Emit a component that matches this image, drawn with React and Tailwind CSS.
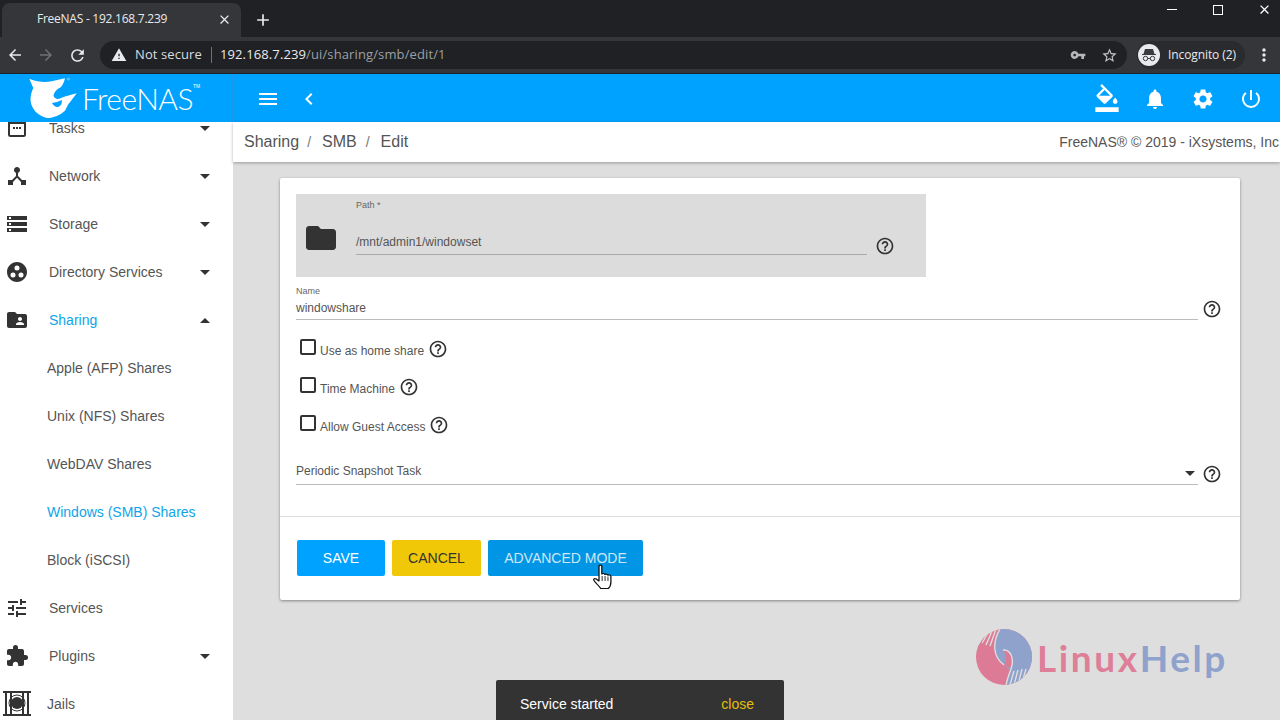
import React from "react";
import {
  MdAdd, MdArrowBack, MdArrowForward, MdClose, MdDeviceHub, MdStorage, MdExtension, MdFolder, MdFolderShared,
  MdFormatColorFill, MdGroupWork, MdHelpOutline, MdMenu, MdMoreVert, MdNotifications, MdPowerSettingsNew,
  MdRefresh, MdSettings, MdStarBorder, MdTune, MdVpnKey, MdWarning, MdChevronLeft,
} from "react-icons/md";

function TasksIcon() {
  return (
    <svg width="20" height="20" viewBox="0 0 20 20" fill="none">
      <rect x="2" y="2" width="16" height="16" rx="1.5" stroke="#333" strokeWidth="2" />
      <rect x="2" y="2" width="16" height="4" fill="#333" />
      <rect x="6" y="9" width="2" height="2" fill="#333" />
      <rect x="9" y="9" width="2" height="2" fill="#333" />
      <rect x="12" y="9" width="2" height="2" fill="#333" />
    </svg>
  );
}

function JailIcon() {
  return (
    <svg width="28" height="28" viewBox="0 0 28 28" fill="none">
      <rect x="0" y="1" width="28" height="2" fill="#333" />
      <rect x="0" y="24" width="28" height="2" fill="#333" />
      <rect x="2" y="3" width="2" height="21" fill="#333" />
      <rect x="7" y="3" width="2" height="21" fill="#333" />
      <rect x="19" y="3" width="2" height="21" fill="#333" />
      <rect x="24" y="3" width="2" height="21" fill="#333" />
      <circle cx="14" cy="13" r="6" fill="#333" />
      <circle cx="14" cy="13" r="8" stroke="#333" strokeWidth="1" />
    </svg>
  );
}

function Caret({ up }) {
  return (
    <span
      className={
        up
          ? "w-0 h-0 border-x-[5px] border-x-transparent border-b-[5px] border-b-[#333]"
          : "w-0 h-0 border-x-[5px] border-x-transparent border-t-[5px] border-t-[#333]"
      }
    />
  );
}

function NavRow({ icon, label, caret, up, active, tight }) {
  const color = active ? "text-[#0ea5e9]" : "text-[#555]";
  return (
    <div className="h-12 shrink-0 flex items-center text-sm">
      <span className="w-[34px] flex justify-center shrink-0">{icon}</span>
      <span className={tight ? `ml-[13px] flex-1 ${color}` : `ml-[15px] flex-1 ${color}`}>{label}</span>
      {caret && (
        <span className="mr-[23px] flex">
          <Caret up={up} />
        </span>
      )}
    </div>
  );
}

function SubRow({ label, active }) {
  return (
    <div className={active ? "h-12 shrink-0 flex items-center pl-[47px] text-sm text-[#0ea5e9]" : "h-12 shrink-0 flex items-center pl-[47px] text-sm text-[#555]"}>
      {label}
    </div>
  );
}

function Help() {
  return <MdHelpOutline className="text-[#333] shrink-0" size={20} />;
}

function CheckRow({ label }) {
  return (
    <div className="h-[38px] flex items-center pl-1">
      <span className="w-4 h-4 border-2 border-[#333] rounded-[2px] shrink-0 -mt-[6px]" />
      <span className="ml-1 text-xs text-[#555] mt-[1px]">{label}</span>
      <span className="ml-1 -mt-[2px] flex"><Help /></span>
    </div>
  );
}

function Shark() {
  return (
    <svg width="50" height="42" viewBox="28 77 50 42">
      <path
        fill="#fff"
        d="M29.3 78.7 C37 82 45 82.5 51.7 81.3 L65 78.3 C64 83 62 86 60.7 87.3 C57 89 54 92 53.5 96 C55 99 58 100 61 98 C65 96.5 70 95 76.7 93.3 C74 97 71.5 100 70 102.3 C68 104 67 107 65 110.7 C60 115 54 118 47 118 C38 116 31 109 30.5 100 C30.5 95 31.5 92 33.3 88 Z"
      />
      <path fill="#00a2ff" d="M52 103 L57 102 L62 100 L61.5 104 C59 108 55 108 52 103 Z" />
      <circle cx="68.5" cy="79" r="1" fill="none" stroke="#fff" strokeWidth="0.4" />
    </svg>
  );
}

function IncognitoIcon() {
  return (
    <svg width="22" height="22" viewBox="0 0 22 22">
      <circle cx="11" cy="11" r="11" fill="#e8eaed" />
      <path fill="#3a3b3f" d="M7 5 H15 L16.5 10 H18 V11 H4 V10 H5.5 Z" />
      <circle cx="7.5" cy="14.5" r="2.2" fill="none" stroke="#3a3b3f" strokeWidth="1" />
      <circle cx="14.5" cy="14.5" r="2.2" fill="none" stroke="#3a3b3f" strokeWidth="1" />
      <rect x="9.5" y="14" width="3" height="1" fill="#3a3b3f" />
    </svg>
  );
}

function HandCursor() {
  return (
    <svg width="21" height="26" viewBox="0 0 18 26" preserveAspectRatio="none">
      <path
        fill="#fff"
        stroke="#111"
        strokeWidth="1.1"
        strokeLinejoin="round"
        d="M6 2 C6 0.8 8.4 0.8 8.4 2 V10 C9.5 9 11 9.5 11 10.5 C12 9.8 13.4 10.2 13.6 11.2 C14.6 10.6 16.2 11 16.2 12.4 V18 C16.2 21 15 23.5 14 24.5 H7.5 C6.5 22.5 3 19 1.6 16.2 C1 15 2.4 14 3.6 15 L6 17 Z"
      />
      <path stroke="#111" strokeWidth="0.8" d="M8.7 12 V17 M11.2 12 V17 M13.7 12.5 V17" />
    </svg>
  );
}

function HandsLogo() {
  const bg = "#dedede";
  return (
    <svg width="56" height="56" viewBox="0 0 56 56">
      <defs>
        <clipPath id="logo-disc">
          <circle cx="28" cy="28" r="28" />
        </clipPath>
      </defs>
      <g clipPath="url(#logo-disc)">
        <rect width="56" height="56" fill="#dd7a96" />
        <path fill="#8ea2cc" d="M24 0 C16 14 17 28 28 36 L34 41 C33 46 31 50 30 56 L56 56 L56 0 Z" />
        <path fill="#dd7a96" d="M27 21 C35 20 38 30 35 39 L28 36 C31 31 31 26 27 21 Z" />
        <g fill="none" stroke={bg} strokeWidth="1.4">
          <path d="M24 0 C16 14 17 28 28 36" />
          <path d="M27 21 C36 20 38 32 35 40 C33 46 31 50 30 56" />
          <path d="M6 14 L12 4 M10 16 L16 2 M14 17 L20 0" />
          <path d="M34 56 L38 42 M38 56 L42 41 M42 56 L46 40 M46 54 L50 40" />
        </g>
      </g>
    </svg>
  );
}

export default function App() {
  return (
    <div className="w-[1280px] h-[720px] overflow-hidden flex flex-col relative font-['Liberation_Sans',Arial,sans-serif] bg-[#dedede]">
      {/* browser tabs */}
      <div className="h-[37px] shrink-0 bg-[#202124] flex items-end relative">
        <div className="ml-[2px] w-[239px] h-[34px] bg-[#35363a] rounded-t-lg flex items-center pl-[35px] pr-[9px] font-['Open_Sans',sans-serif] text-xs tracking-[-0.25px] text-[#e8eaed]">
          <span className="flex-1 -mt-[2px]">FreeNAS - 192.168.7.239</span>
          <MdClose size={15} className="text-[#e8eaed] -mt-[2px]" />
        </div>
        <MdAdd size={20} className="ml-[12px] mb-[7px] text-[#e8eaed]" />
        <div className="ml-auto flex items-center h-full self-start -mr-[7px]">
          <span className="w-[46px] flex justify-center -mt-[18px]"><span className="w-[10px] h-px bg-white" /></span>
          <span className="w-[46px] flex justify-center -mt-[18px]"><span className="w-[10px] h-[10px] border border-white" /></span>
          <span className="w-[46px] flex justify-center -mt-[18px]"><MdClose size={15} className="text-white" /></span>
        </div>
      </div>
      {/* browser toolbar */}
      <div className="h-[37px] shrink-0 bg-[#35363a] flex items-center font-['Open_Sans',sans-serif] text-[#e8eaed] border-b border-[#202124]">
        <MdArrowBack size={18} className="ml-[6px]" />
        <MdArrowForward size={18} className="ml-[13px] text-[#6f7073]" />
        <MdRefresh size={19} className="ml-[13px]" />
        <div className="ml-[13px] w-[1027px] h-[28px] rounded-full bg-[#202124] flex items-center pl-[11px] pr-[12px]">
          <MdWarning size={16} className="text-[#e8eaed]" />
          <span className="ml-[8px] text-[13px] tracking-[0.1px] text-[#dadce0]">Not secure</span>
          <span className="ml-[9px] w-px h-4 bg-[#6f7073]" />
          <span className="ml-[8px] text-[13px] tracking-[0.12px] text-[#e8eaed]">192.168.7.239<span className="text-[#9aa0a6]">/ui/sharing/smb/edit/1</span></span>
          <MdVpnKey size={16} className="ml-auto text-[#b5b7ba]" />
          <MdStarBorder size={17} className="ml-[15px] mr-[-3px] text-[#c4c6c9]" />
        </div>
        <div className="ml-[10px] w-[108px] h-[28px] rounded-full bg-[#2a2b2e] flex items-center pl-[1px]">
          <IncognitoIcon />
          <span className="ml-[8px] text-xs tracking-[-0.1px] text-[#e8eaed]">Incognito (2)</span>
        </div>
        <MdMoreVert size={20} className="ml-[9px] text-[#e8eaed]" />
      </div>
      {/* app header */}
      <div className="h-12 shrink-0 bg-[#00a2ff] flex items-center text-white">
        <div className="w-[233px] h-full shrink-0 flex items-center pl-[28px] border-r border-[#1b98e6]">
          <Shark />
          <span className="ml-[4px] font-['Lato',sans-serif] font-light text-[30px] tracking-[-0.5px] leading-none">FreeNAS</span>
          <span className="text-[5px] -mt-[22px]">TM</span>
        </div>
        <MdMenu size={24} className="ml-[23px] mt-[2px]" />
        <MdChevronLeft size={24} className="ml-[17px] mt-[2px]" />
        <div className="ml-auto flex items-center gap-[24px] pr-[17px] mt-[2px]">
          <MdFormatColorFill size={28} className="-mr-[2px] -mt-[2px]" />
          <MdNotifications size={24} />
          <MdSettings size={24} />
          <MdPowerSettingsNew size={24} />
        </div>
      </div>
      {/* body */}
      <div className="flex-1 min-h-0 flex">
        <aside className="w-[233px] shrink-0 bg-white overflow-hidden flex flex-col">
          <div className="-mt-[18px] flex flex-col">
            <NavRow icon={<TasksIcon />} label="Tasks" caret />
            <NavRow icon={<MdDeviceHub size={24} className="text-[#333]" />} label="Network" caret />
            <NavRow icon={<MdStorage size={24} className="text-[#333]" />} label="Storage" caret />
            <NavRow icon={<MdGroupWork size={24} className="text-[#333]" />} label="Directory Services" caret />
            <NavRow icon={<MdFolderShared size={24} className="text-[#333]" />} label="Sharing" caret up active />
            <SubRow label="Apple (AFP) Shares" />
            <SubRow label="Unix (NFS) Shares" />
            <SubRow label="WebDAV Shares" />
            <SubRow label="Windows (SMB) Shares" active />
            <SubRow label="Block (iSCSI)" />
            <NavRow icon={<MdTune size={24} className="text-[#333]" />} label="Services" />
            <NavRow icon={<MdExtension size={24} className="text-[#333]" />} label="Plugins" caret />
            <NavRow icon={<JailIcon />} label="Jails" tight />
          </div>
        </aside>
        <main className="flex-1 min-w-0 flex flex-col relative">
          <div className="h-10 shrink-0 bg-white flex items-center pl-[11px] shadow-[0_1px_3px_rgba(0,0,0,0.3)] text-[#555]">
            <span className="text-base">Sharing</span>
            <span className="ml-[8px] text-sm text-[#777]">/</span>
            <span className="ml-[11px] text-base">SMB</span>
            <span className="ml-[9px] text-sm text-[#777]">/</span>
            <span className="ml-[11px] text-base">Edit</span>
            <span className="ml-auto mr-[1px] text-sm whitespace-nowrap text-[#555]">FreeNAS® © 2019 - iXsystems, Inc</span>
          </div>
          <div className="mt-4 ml-[47px] w-[960px] h-[422px] bg-white rounded-[2px] shadow-[0_1px_3px_rgba(0,0,0,0.4)] flex flex-col">
            <div className="px-4 pt-4">
              <div className="w-[630px] h-[83px] bg-[#dcdcdc] flex">
                <MdFolder size={36} className="text-[#333] ml-[7px] mt-[26px] shrink-0" />
                <div className="ml-[17px] w-[511px] flex flex-col">
                  <span className="mt-[7px] text-[9px] leading-[9px] text-[#666]">Path *</span>
                  <span className="mt-[25px] text-xs leading-[14px] text-[#555]">/mnt/admin1/windowset</span>
                  <span className="mt-[5px] h-px bg-[#aaa]" />
                </div>
                <span className="ml-[8px] mt-[42px] flex"><Help /></span>
              </div>
              <div className="mt-[10px] flex items-start">
                <div className="flex-1 flex flex-col">
                  <span className="text-[9px] leading-[9px] text-[#666]">Name</span>
                  <span className="mt-[5px] text-xs leading-[14px] text-[#555]">windowshare</span>
                  <span className="mt-[4px] h-px bg-[#bbb]" />
                </div>
                <span className="ml-[2px] mt-[12px] w-[24px] flex justify-center"><Help /></span>
              </div>
              <div className="mt-[11px] flex flex-col">
                <CheckRow label="Use as home share" />
                <CheckRow label="Time Machine" />
                <CheckRow label="Allow Guest Access" />
              </div>
              <div className="mt-[19px] flex items-start">
                <div className="flex-1 flex flex-col">
                  <div className="flex items-center justify-between pr-[3px]">
                    <span className="text-xs leading-[14px] text-[#555]">Periodic Snapshot Task</span>
                    <span className="mt-[4px] flex"><Caret /></span>
                  </div>
                  <span className="mt-[6px] h-px bg-[#bbb]" />
                </div>
                <span className="ml-[2px] mt-0 w-[24px] flex justify-center"><Help /></span>
              </div>
            </div>
            <div className="mt-[31px] h-px bg-[#ddd]" />
            <div className="mt-[23px] ml-[17px] flex gap-[7px] text-sm relative">
              <div className="w-[88px] h-9 rounded-[2px] bg-[#00a2ff] text-white flex items-center justify-center">SAVE</div>
              <div className="w-[89px] h-9 rounded-[2px] bg-[#f0c808] text-[#333] flex items-center justify-center">CANCEL</div>
              <div className="w-[155px] h-9 rounded-[2px] bg-[#0095e5] text-[#cfe6f5] flex items-center justify-center">ADVANCED MODE</div>
              <span className="absolute left-[295px] top-[24px] flex"><HandCursor /></span>
            </div>
          </div>
          {/* watermark */}
          <div className="absolute left-[743px] top-[507px] flex items-center">
            <HandsLogo />
            <span className="ml-[5px] font-['Lato',sans-serif] font-bold text-[37px] tracking-[2.6px] leading-none text-[#dd7f99]">
              Linux<span className="text-[#8ea2cc]">Help</span>
            </span>
          </div>
          {/* snackbar */}
          <div className="absolute left-[263px] top-[558px] w-[288px] h-12 bg-[#333] rounded-t-[2px] flex items-center pl-6 pr-[30px] text-sm">
            <span className="text-white">Service started</span>
            <span className="ml-auto text-[#e5bf0b]">close</span>
          </div>
        </main>
      </div>
    </div>
  );
}
